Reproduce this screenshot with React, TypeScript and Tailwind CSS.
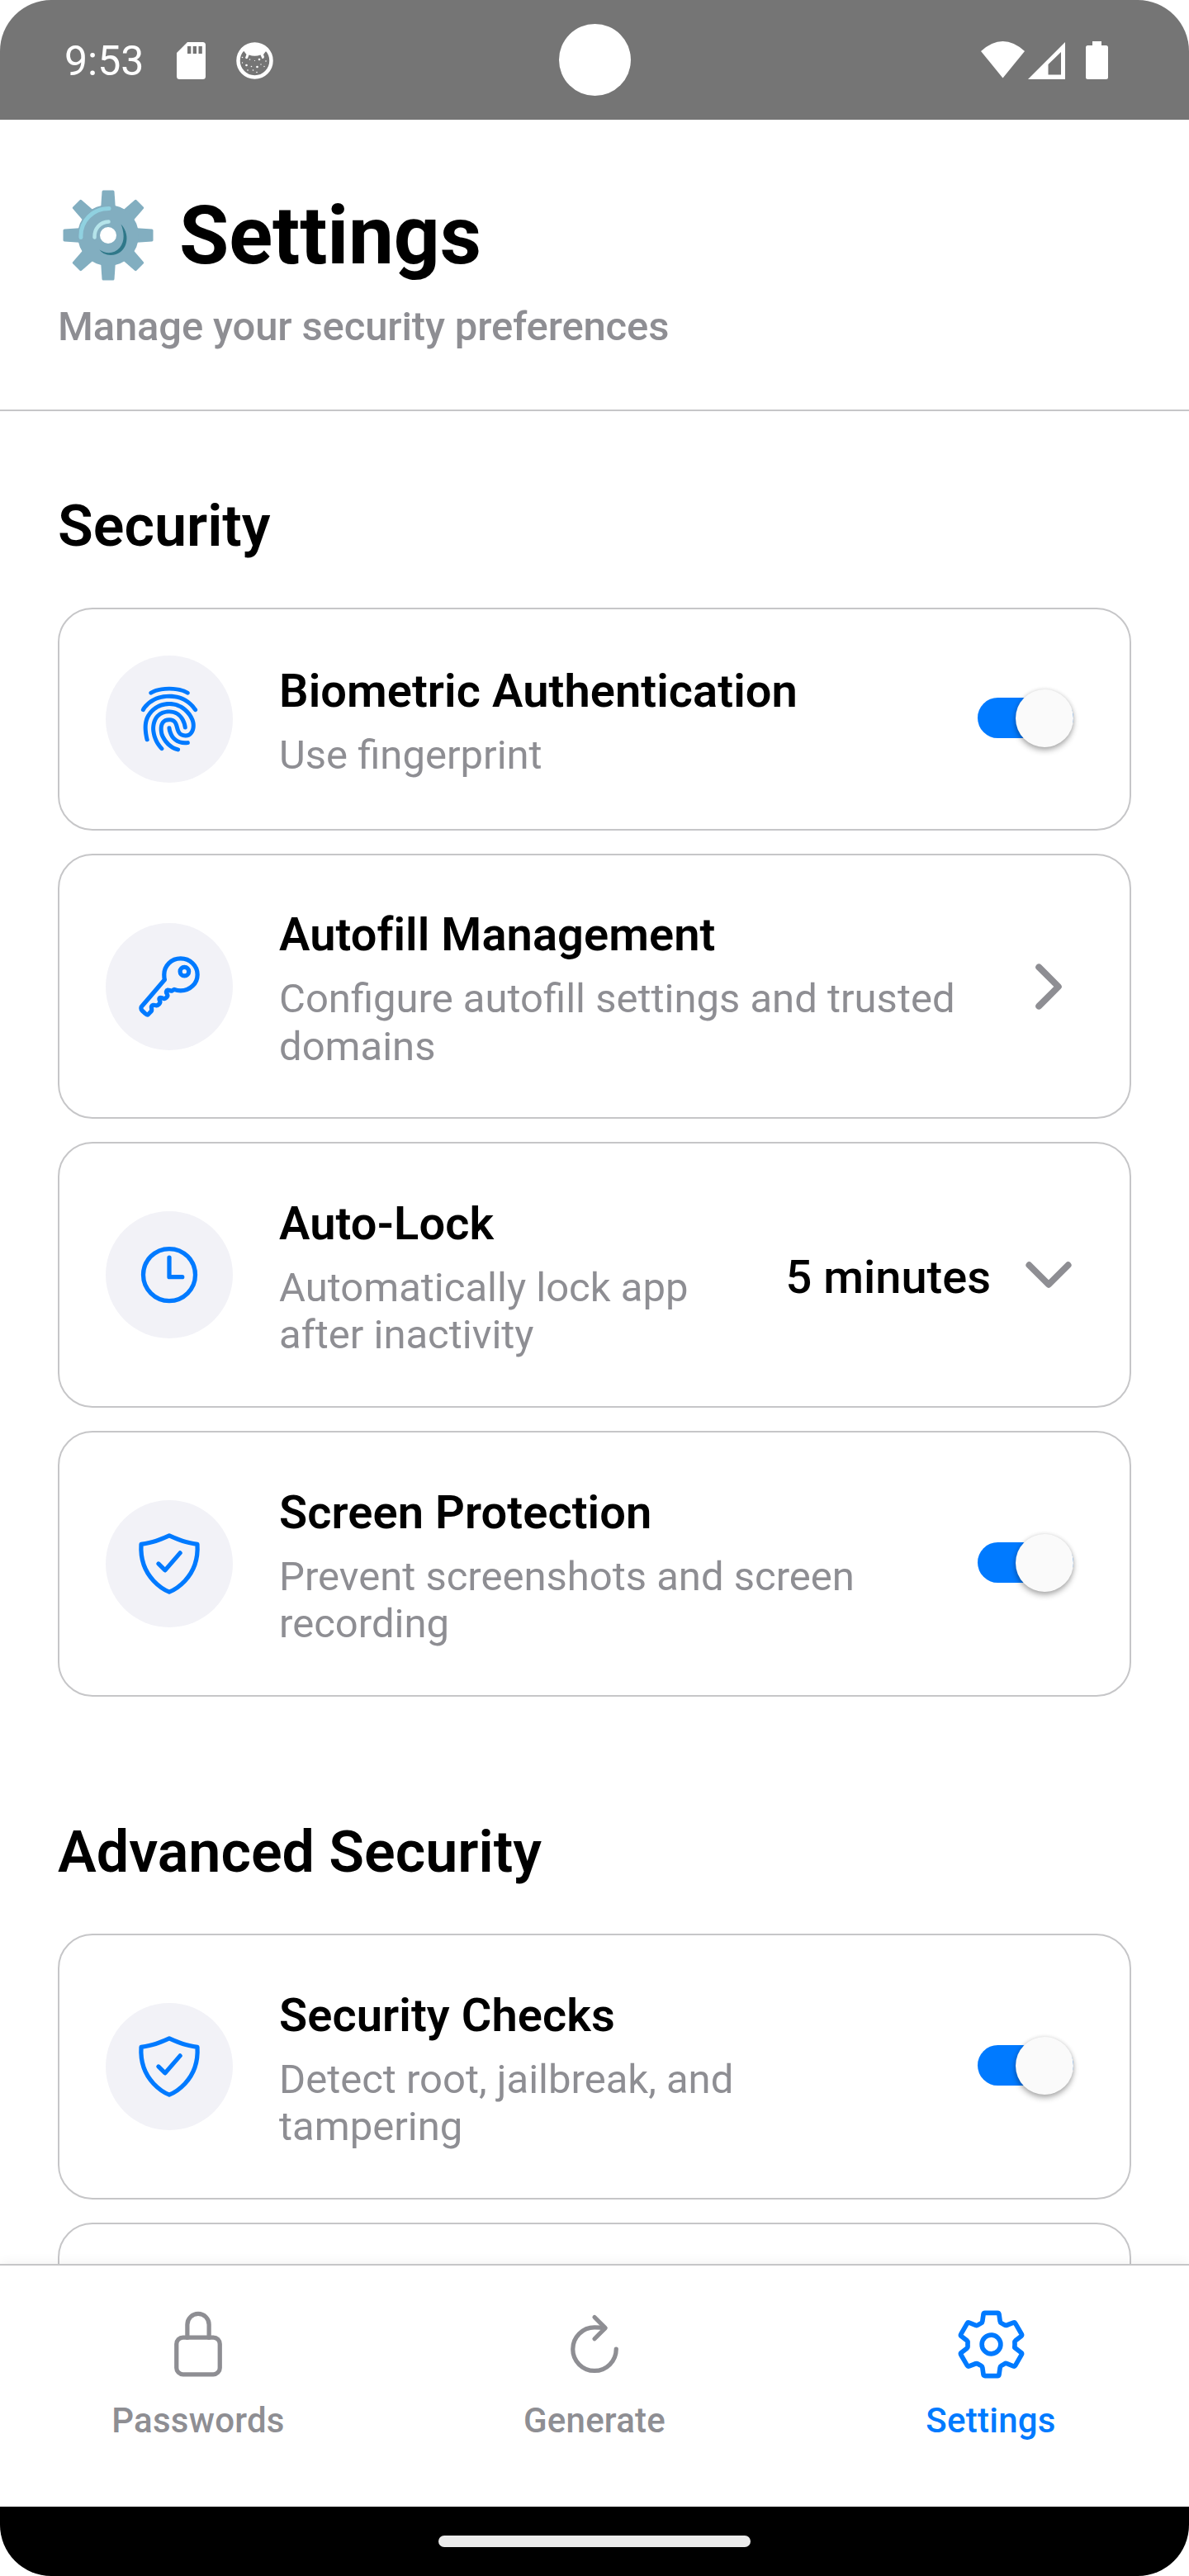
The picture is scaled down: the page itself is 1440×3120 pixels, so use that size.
import React from "react";
import {
  IoFingerPrint,
  IoKeyOutline,
  IoTimeOutline,
  IoShieldCheckmarkOutline,
  IoLockClosedOutline,
  IoRefreshOutline,
  IoSettingsOutline,
  IoChevronForward,
  IoChevronDown,
} from "react-icons/io5";

function StatusBar() {
  return (
    <div className="relative flex h-[145px] shrink-0 items-center bg-[#757575] pl-[78px] pr-[98px] text-white">
      <span className="mt-[3px] w-[136px] text-[50px] leading-[58px]">9:53</span>
      <svg className="mt-0.5" width="35" height="45" viewBox="0 0 35 45" fill="#fff">
        <path
          fillRule="evenodd"
          d="M13 0H31.500a3.500 3.500 0 0 1 3.500 3.500V41.500a3.500 3.500 0 0 1-3.500 3.500H3.500a3.500 3.500 0 0 1-3.500-3.500V13zM13 5v9h4.300V5zM19.700 5v9H24V5zM26.500 5v9h4.300V5z"
        />
      </svg>
      <svg className="ml-[37px] mt-0.5" width="45" height="45" viewBox="0 0 45 45">
        <circle cx="22.500" cy="22.500" r="20" fill="none" stroke="#fff" strokeWidth="4.500" />
        <path d="M5.500 8Q22 -5 39.500 8L36.500 10.500 33 15 34 18Q33.500 20.500 31.500 20L29.500 15.500Q22.500 18 15.500 15.500L14 19.500Q12 21 11 19L12.500 15 9 10.500z" fill="#fff" />
        <g fill="#fff">
          <circle cx="7.500" cy="18.500" r=".8" />
          <circle cx="12.500" cy="28" r="1.300" />
          <circle cx="16.500" cy="21" r=".8" />
          <circle cx="22.500" cy="22.500" r=".6" />
          <circle cx="28" cy="21" r="1.300" />
          <circle cx="36" cy="23" r=".8" />
          <circle cx="7.500" cy="25" r=".7" />
          <circle cx="18.500" cy="29.500" r=".8" />
          <circle cx="25.500" cy="30" r="1.300" />
          <circle cx="34" cy="29.500" r=".7" />
          <circle cx="14" cy="34" r=".8" />
          <circle cx="20.500" cy="34" r=".8" />
          <circle cx="25" cy="36.500" r=".8" />
          <circle cx="30" cy="27" r=".7" />
        </g>
      </svg>
      <svg className="ml-auto" width="53" height="45" viewBox="0 0 53 45" fill="#fff">
        <path d="M0 12Q26.500-12 53 12L26.500 44.500z" />
      </svg>
      <svg className="ml-1 mt-px" width="45" height="45" viewBox="0 0 45 45" fill="#fff">
        <path fillRule="evenodd" d="M45 0V45H0zM40 12L24.500 27V39.500H40z" />
      </svg>
      <svg className="ml-[25px] mt-px" width="27" height="46" viewBox="0 0 27 46" fill="#fff">
        <path d="M8 0H19V5H24.500A2.500 2.500 0 0 1 27 7.500V43.500A2.500 2.500 0 0 1 24.500 46H2.500A2.500 2.500 0 0 1 0 43.500V7.500A2.500 2.500 0 0 1 2.500 5H8z" />
      </svg>
      <div className="absolute left-[677px] top-[29px] size-[87px] rounded-full bg-white" />
    </div>
  );
}

function Tooth({ angle }: { angle: number }) {
  return <path d="M46 24L47.500 2Q47.700 0.500 49 0.500H61Q62.300 0.500 62.500 2L64 24z" transform={`rotate(${angle} 55 55)`} />;
}

function GearEmoji() {
  return (
    <svg width="110" height="110" viewBox="0 0 110 110">
      <g fill="#82aec0">
        {[0, 45, 90, 135, 180, 225, 270, 315].map((a) => (
          <Tooth key={a} angle={a} />
        ))}
        <path fillRule="evenodd" d="M55 18a37 37 0 1 0 0 74a37 37 0 1 0 0-74zM55 45a10 10 0 1 1 0 20a10 10 0 1 1 0-20z" />
      </g>
      <path d="M22 57.500C21 38 36 22.500 56 22.500" fill="none" stroke="#90d1e0" strokeWidth="5" strokeLinecap="round" />
      <path d="M38.500 57.500C38 47 45 39 55.500 38.500" fill="none" stroke="#b5e4ea" strokeWidth="4.500" strokeLinecap="round" />
      <path d="M70.500 41.500C84 56 77 79 58 79Q49 79 44.500 72.500C52 77.500 62 78 69 70C76 62 74 50 70.500 41.500z" fill="#2f7889" />
    </svg>
  );
}

function Switch() {
  return (
    <div className="relative mb-0.5 mr-3 h-[70px] w-[116px] shrink-0">
      <div className="absolute left-0 top-[10px] h-[49px] w-full rounded-full bg-[#007aff]" />
      <div className="absolute right-0 top-0 size-[70px] rounded-full bg-[#fafafa] shadow-[0_4px_7px_rgba(0,0,0,0.3),0_0_5px_rgba(0,0,0,0.12)]" />
    </div>
  );
}

type CardProps = {
  icon: React.ReactNode;
  title: string;
  text: string;
  height: string;
  children?: React.ReactNode;
};

function Card({ icon, title, text, height, children }: CardProps) {
  return (
    <div className={`flex shrink-0 items-center rounded-[42px] border-2 border-[#c6c6c8] bg-white px-14 ${height}`}>
      <div className="flex size-[154px] shrink-0 items-center justify-center rounded-full bg-[#f2f2f7] text-[84px] text-[#007aff]">
        {icon}
      </div>
      <div className="ml-14 grow pb-px pt-[7px]">
        <div className="text-[56px] font-semibold leading-[66px] tracking-[0.08px] text-black">{title}</div>
        <div className="mt-4 whitespace-pre text-[49px] leading-[57.4px] text-[#8e8e93]">{text}</div>
      </div>
      {children}
    </div>
  );
}

function SectionTitle({ children }: { children: React.ReactNode }) {
  return <h2 className="mb-[58px] text-[70px] font-semibold leading-[82px] text-black">{children}</h2>;
}

function Tab({ icon, label, active }: { icon: React.ReactNode; label: string; active?: boolean }) {
  return (
    <div className={`flex flex-1 flex-col items-center pt-[53px] ${active ? "text-[#007aff]" : "text-[#8e8e93]"}`}>
      <div className={`flex h-[84px] items-center ${active ? "text-[91px]" : "text-[84px]"}`}>{icon}</div>
      <div className="mt-[26px] text-[42px] font-medium leading-[49px] tracking-[0.25px]">{label}</div>
    </div>
  );
}

export default function App() {
  return (
    <div className="h-[3120px] w-[1440px] bg-white font-['Roboto',sans-serif]">
      <div className="flex h-full flex-col overflow-hidden rounded-[62px] bg-white">
        <StatusBar />
        <header className="h-[353px] shrink-0 border-b-2 border-[#c6c6c8] px-[70px] pt-[83px]">
          <div className="flex h-[115px] items-center">
            <div className="mb-0.5 ml-[6px] mr-[31px]">
              <GearEmoji />
            </div>
            <h1 className="text-[98px] font-bold leading-[115px] tracking-[-0.1px] text-black">Settings</h1>
          </div>
          <p className="mt-6 text-[49px] font-medium leading-[57px] tracking-[-0.15px] text-[#8e8e93]">
            Manage your security preferences
          </p>
        </header>
        <main className="flex min-h-0 grow flex-col overflow-hidden px-[70px] pt-[98px]">
          <SectionTitle>Security</SectionTitle>
          <div className="flex shrink-0 flex-col gap-7">
            <Card height="h-[270px]" icon={<IoFingerPrint />} title="Biometric Authentication" text="Use fingerprint">
              <Switch />
            </Card>
            <Card
              height="h-[321px]"
              icon={<IoKeyOutline />}
              title="Autofill Management"
              text={"Configure autofill settings and trusted\ndomains"}
            >
              <IoChevronForward className="shrink-0 text-[84px] text-[#8e8e93]" />
            </Card>
            <Card
              height="h-[322px]"
              icon={<IoTimeOutline />}
              title="Auto-Lock"
              text={"Automatically lock app\nafter inactivity"}
            >
              <span className="mr-7 mt-[5px] shrink-0 text-[56px] font-medium leading-[66px] text-black">5 minutes</span>
              <IoChevronDown className="shrink-0 text-[84px] text-[#8e8e93]" />
            </Card>
            <Card
              height="h-[322px]"
              icon={<IoShieldCheckmarkOutline />}
              title="Screen Protection"
              text={"Prevent screenshots and screen\nrecording"}
            >
              <Switch />
            </Card>
          </div>
          <div className="mt-[147px] shrink-0">
            <SectionTitle>Advanced Security</SectionTitle>
          </div>
          <div className="flex shrink-0 flex-col gap-7">
            <Card
              height="h-[322px]"
              icon={<IoShieldCheckmarkOutline />}
              title="Security Checks"
              text={"Detect root, jailbreak, and\ntampering"}
            >
              <Switch />
            </Card>
            <div className="h-[321px] shrink-0 rounded-[42px] border-2 border-[#c6c6c8] bg-white" />
          </div>
        </main>
        <nav className="relative flex h-[294px] shrink-0 border-t-2 border-[#c6c6c8] bg-white shadow-[0_0_14px_rgba(0,0,0,0.07)]">
          <Tab icon={<IoLockClosedOutline />} label="Passwords" />
          <Tab icon={<IoRefreshOutline />} label="Generate" />
          <Tab icon={<IoSettingsOutline />} label="Settings" active />
        </nav>
        <div className="relative flex h-[84px] shrink-0 items-center justify-center bg-black">
          <div className="h-[14px] w-[378px] rounded-full bg-[#ebebeb]" />
        </div>
      </div>
    </div>
  );
}
